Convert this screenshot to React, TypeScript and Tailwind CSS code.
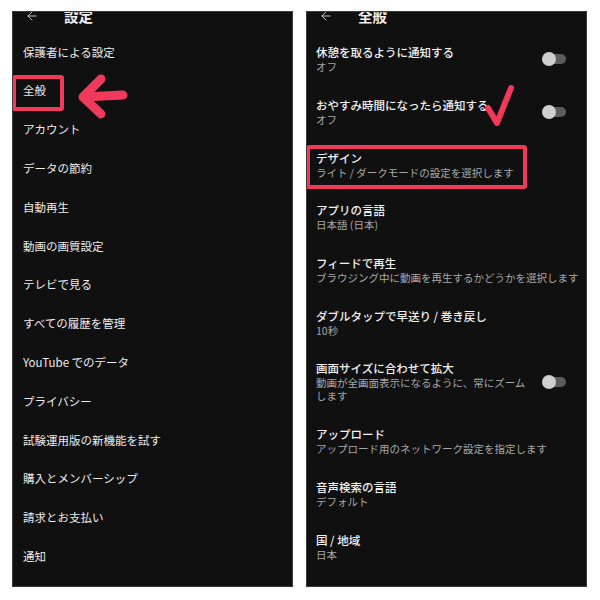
import { ArrowLeft } from "lucide-react"

const leftItems = [
  "保護者による設定",
  "全般",
  "アカウント",
  "データの節約",
  "自動再生",
  "動画の画質設定",
  "テレビで見る",
  "すべての履歴を管理",
  "YouTube でのデータ",
  "プライバシー",
  "試験運用版の新機能を試す",
  "購入とメンバーシップ",
  "請求とお支払い",
  "通知",
]

interface GeneralItem {
  title: string
  sub: string
  toggle?: boolean
  boxed?: boolean
}

const generalItems: GeneralItem[] = [
  { title: "休憩を取るように通知する", sub: "オフ", toggle: true },
  { title: "おやすみ時間になったら通知する", sub: "オフ", toggle: true },
  { title: "デザイン", sub: "ライト / ダークモードの設定を選択します", boxed: true },
  { title: "アプリの言語", sub: "日本語 (日本)" },
  { title: "フィードで再生", sub: "ブラウジング中に動画を再生するかどうかを選択します" },
  { title: "ダブルタップで早送り / 巻き戻し", sub: "10秒" },
  { title: "画面サイズに合わせて拡大", sub: "動画が全画面表示になるように、常にズームします", toggle: true },
  { title: "アップロード", sub: "アップロード用のネットワーク設定を指定します" },
  { title: "音声検索の言語", sub: "デフォルト" },
  { title: "国 / 地域", sub: "日本" },
]

function Toggle() {
  return (
    <div className="relative w-[24px] h-[14px] ml-auto mr-[20px] shrink-0">
      <div className="absolute right-0 top-[2px] w-[18px] h-[10px] rounded-full bg-[#5c5c5c]" />
      <div className="absolute left-0 top-0 w-[14px] h-[14px] rounded-full bg-[#cfcfcf]" />
    </div>
  )
}

function Header({ title }: { title: string }) {
  return (
    <div className="h-[22px] -mt-[7px] flex items-center pl-[12px]">
      <ArrowLeft size={14} strokeWidth={1.5} className="text-[#d8d8d8]" />
      <span className="ml-[25px] text-[14.5px] font-bold text-[#f1f1f1] leading-none">{title}</span>
    </div>
  )
}

export default function App() {
  return (
    <div
      className="w-[600px] h-[600px] bg-white flex pl-[12px] gap-[13px]"
      style={{ fontFamily: '"Noto Sans CJK JP", "Noto Sans", sans-serif' }}
    >
      {/* settings list */}
      <div className="relative w-[281px] h-[576px] mt-[11px] bg-[#101010] border border-[#3a3a3a] overflow-hidden">
        <Header title="設定" />
        <div className="pt-[6px] flex flex-col">
          {leftItems.map((item) => (
            <div key={item} className="relative h-[38.8px] flex items-center pl-[10px]">
              <span className="text-[11.5px] text-[#ececec] leading-none">{item}</span>
              {item === "全般" && (
                <div className="absolute -left-[1px] top-[3px] w-[52px] h-[36px] border-[4px] border-[#f13a5b] rounded-[3px]" />
              )}
            </div>
          ))}
        </div>
        <svg className="absolute left-0 top-0" width="281" height="200" viewBox="0 0 281 200">
          <g transform="translate(-13 -12)" fill="none" stroke="#f13a5b" strokeWidth="9" strokeLinecap="round" strokeLinejoin="round">
            <path d="M101 79 L83 97 L101 114" />
            <path d="M84 97 L123 95" />
          </g>
        </svg>
      </div>

      {/* general settings */}
      <div className="relative w-[281px] h-[576px] mt-[11px] bg-[#101010] border border-[#3a3a3a] overflow-hidden">
        <Header title="全般" />
        <div className="pt-[6px] flex flex-col">
          {generalItems.map((item) => (
            <div key={item.title} className="relative flex items-center py-[12.35px] pl-[9px]">
              <div className={item.toggle ? "w-[214px]" : "flex-1 min-w-0"}>
                <div className="text-[11.5px] leading-[15px] font-medium text-[#f1f1f1] whitespace-nowrap">{item.title}</div>
                <div className="text-[10.5px] leading-[13px] text-[#a8a8a8]">{item.sub}</div>
              </div>
              {item.toggle && <Toggle />}
              {item.boxed && (
                <div className="absolute -left-[1px] top-[7px] w-[221px] h-[44px] border-[4px] border-[#f13a5b] rounded-[3px]" />
              )}
            </div>
          ))}
        </div>
        <svg className="absolute left-0 top-0" width="281" height="200" viewBox="0 0 281 200">
          <g transform="translate(-307 -12)" fill="none" stroke="#f13a5b" strokeWidth="6" strokeLinecap="round" strokeLinejoin="round">
            <path d="M488 108 L497 123 L511 88" />
          </g>
        </svg>
      </div>
    </div>
  )
}
